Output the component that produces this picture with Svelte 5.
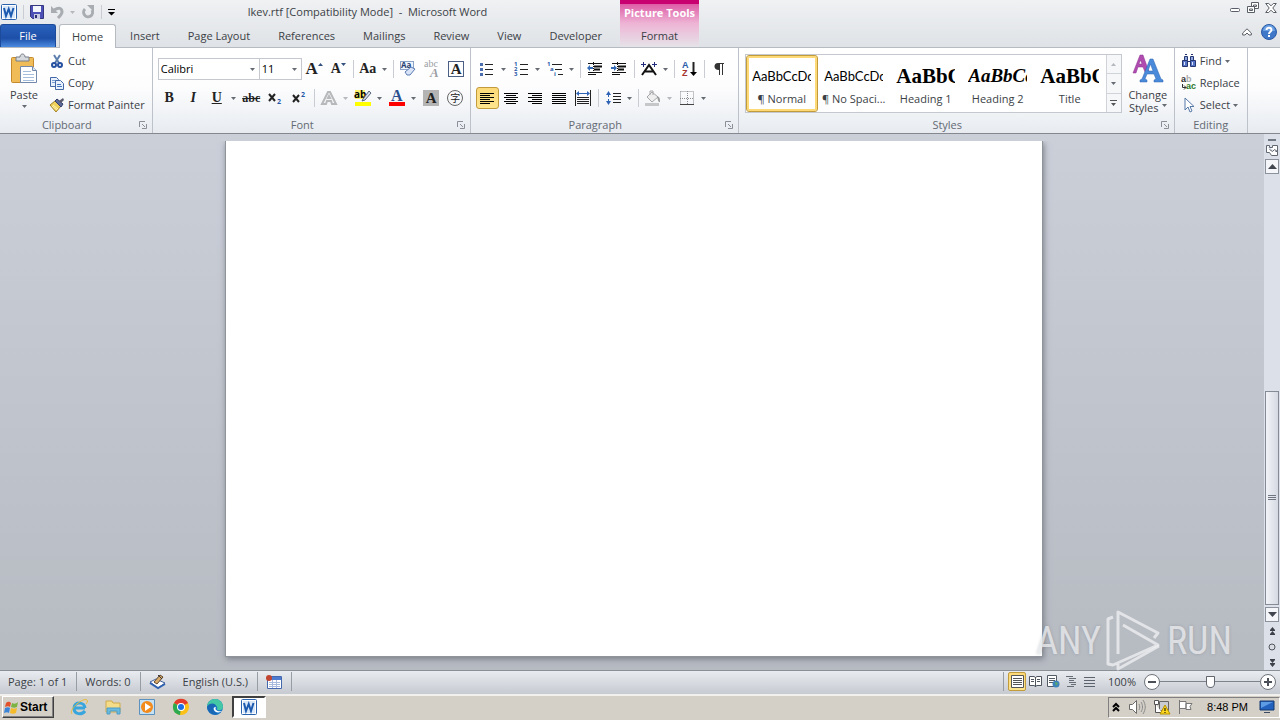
<script lang="ts">
  const tabs = ['Home', 'Insert', 'Page Layout', 'References', 'Mailings', 'Review', 'View', 'Developer'];
  let activeTab = $state('Home');

  const styles = [
    { name: '¶ Normal', sample: 'AaBbCcDc', kind: 'plain' },
    { name: '¶ No Spaci...', sample: 'AaBbCcDc', kind: 'plain' },
    { name: 'Heading 1', sample: 'AaBbC', kind: 'heading' },
    { name: 'Heading 2', sample: 'AaBbCc', kind: 'heading slanted' },
    { name: 'Title', sample: 'AaBbC', kind: 'heading' },
  ];
  let activeStyle = $state('¶ Normal');

  // [x, width] of every text line in the alignment glyphs, top to bottom
  const alignments: Record<string, number[][]> = {
    'Align Left': [[1, 14], [1, 10], [1, 14], [1, 10], [1, 14], [1, 10]],
    Center: [[1, 14], [3, 10], [1, 14], [3, 10], [1, 14], [3, 10]],
    'Align Right': [[1, 14], [5, 10], [1, 14], [5, 10], [1, 14], [5, 10]],
    Justify: [[1, 14], [1, 14], [1, 14], [1, 14], [1, 14], [1, 14]],
  };
  let alignment = $state('Align Left');
  let zoom = $state(50);
</script>

{#snippet arrow(cls = '')}
  <svg class="arrow {cls}" width="5" height="3" viewBox="0 0 5 3" aria-hidden="true"><path d="M0 0h5L2.500 3z" /></svg>
{/snippet}

{#snippet launcher(label: string)}
  <button class="launcher" aria-label={label}>
    <svg width="8" height="8" viewBox="0 0 8 8" fill="none" stroke="#8a8f98"><path d="M.5 6V.5H6M3 3l3 3M7.500 3v4.500H3" /></svg>
  </button>
{/snippet}

{#snippet wordLogo()}
  <svg width="16" height="16" viewBox="0 0 16 16">
    <rect x=".5" y=".5" width="15" height="15" rx="1" fill="#fff" stroke="#2a62ad" />
    <path d="M2 2h12v12H2z" fill="#d8e7f8" />
    <path d="M3 4l2 8 2.700-7L10 12l2.500-8" fill="none" stroke="#1c5ab0" stroke-width="2" />
  </svg>
{/snippet}

<div class="window">
  <header>
    <div class="header-main">
      <div class="titlebar">
        <div class="quick">
          {@render wordLogo()}
          <i class="sep"></i>
          <button aria-label="Save">
            <svg width="14" height="14" viewBox="0 0 14 14">
              <path d="M.5.5h13v13h-11l-2-2z" fill="#4c4fb5" stroke="#34367f" />
              <path d="M3 1h8v6H3z" fill="#f3f5fc" /><path d="M4 9h6v5H4z" fill="#c9cbe4" /><path d="M5 10h2v3H5z" fill="#2c2e70" />
            </svg>
          </button>
          <button aria-label="Undo">
            <svg width="14" height="14" viewBox="0 0 14 14" fill="none" stroke="#a9acb1" stroke-width="2">
              <path d="M4 5c5-3 8-2 8 2 0 2-2 4-4 6" stroke-width="3" /><path d="M1 1v7h7z" fill="#a9acb1" stroke="none" />
            </svg>
            {@render arrow('pale')}
          </button>
          <button aria-label="Redo">
            <svg width="14" height="14" viewBox="0 0 14 14" fill="none" stroke="#a9acb1">
              <path d="M4 4a4.500 4.500 0 1 0 7 1" stroke-width="3" /><path d="M6 0h7v7z" fill="#a9acb1" stroke="none" />
            </svg>
          </button>
          <i class="sep"></i>
          <button aria-label="Customize Quick Access Toolbar">
            <svg width="7" height="7" viewBox="0 0 7 7"><path d="M0 0h7v1H0zM0 3h7L3.500 6.500z" /></svg>
          </button>
        </div>
        <h1>lkev.rtf [Compatibility Mode] &nbsp;- &nbsp;Microsoft Word</h1>
      </div>
      <nav class="tabs">
        <button class="file">File</button>
        {#each tabs as tab}
          <button class="tab" class:active={tab === activeTab} onclick={() => (activeTab = tab)}>{tab}</button>
        {/each}
      </nav>
    </div>
    <div class="contextual">
      <strong>Picture Tools</strong>
      <button>Format</button>
    </div>
    <div class="header-end">
      <div class="controls">
        <button aria-label="Minimize">
          <svg width="12" height="12" viewBox="0 0 12 12" fill="#fff" stroke="#5a5f67"><rect x="1.500" y="6.500" width="9" height="3" rx="1" /></svg>
        </button>
        <button aria-label="Restore">
          <svg width="12" height="12" viewBox="0 0 12 12" fill="#fff" stroke="#5a5f67">
            <path d="M4.500.5h7v6h-7zM6.500 3h3v1.500h-3z" /><path d="M.5 4.500h7v6h-7zM2.500 7h3v1.500h-3z" />
          </svg>
        </button>
        <button aria-label="Close">
          <svg width="12" height="12" viewBox="0 0 12 12" fill="#fff" stroke="#5a5f67">
            <path d="M.7 1.500h3L6 3.800l2.300-2.300h3L7.800 6l3.500 4.500h-3L6 8.200l-2.300 2.300h-3L4.200 6z" />
          </svg>
        </button>
      </div>
      <div class="controls help">
        <button aria-label="Minimize the Ribbon">
          <svg width="10" height="8" viewBox="0 0 10 8" fill="#fff" stroke="#5a5f67"><path d="M5 .8L9.300 5v2H7L5 5 3 7H.7V5z" /></svg>
        </button>
        <button aria-label="Help">
          <svg width="16" height="16" viewBox="0 0 16 16">
            <circle cx="8" cy="8" r="7.500" fill="#3f78c9" stroke="#2a5ba5" /><path d="M2 7a6 6 0 0 1 12 0z" fill="#6ba0e3" />
            <path d="M5.500 6C5.500 2.800 10.500 3 10.500 6 10.500 7.800 8 7.800 8 10" fill="none" stroke="#fff" stroke-width="2" /><path d="M7 11h2v2H7z" fill="#fff" />
          </svg>
        </button>
      </div>
    </div>
  </header>

  <div class="ribbon">
    <section class="group">
      <div class="body clipboard">
        <button class="big">
          <svg width="28" height="30" viewBox="0 0 28 30">
            <rect x="1.500" y="3.500" width="22" height="25" rx="1" fill="#f0bc57" stroke="#c48a2d" />
            <path d="M6 3h4c0-4 5-4 5 0h4v4H6z" fill="#d5d9de" stroke="#777d86" />
            <path d="M10.500 12.500h12l4 4v12h-16z" fill="#fff" stroke="#7289ab" /><path d="M22.500 12.500v4h4" fill="#dbe6f4" stroke="#7289ab" />
            <path d="M13 17.500h8M13 20.500h11M13 23.500h11M13 26.500h11" stroke="#a6bddc" />
          </svg>
          <span>Paste</span>
          {@render arrow()}
        </button>
        <div class="stack">
          <button>
            <svg width="16" height="16" viewBox="0 0 16 16" fill="none">
              <path d="M5 2l5 8M11 2L6 10" stroke="#5c7fae" stroke-width="2" /><circle cx="5" cy="12" r="2" stroke="#2650a0" stroke-width="2" /><circle cx="11" cy="12" r="2" stroke="#2650a0" stroke-width="2" />
            </svg>Cut
          </button>
          <button>
            <svg width="16" height="16" viewBox="0 0 16 16" stroke="#4468a6">
              <path d="M1.500 2.500h6l2 2v7h-8z" fill="#e8f1fc" /><path d="M3 5.500h4M3 7.500h4" stroke="#7c9fd3" />
              <path d="M6.500 5.500h5l3 3v6h-8z" fill="#e8f1fc" /><path d="M8 9.500h4M8 11.500h5" stroke="#4776c0" />
            </svg>Copy
          </button>
          <button>
            <svg width="16" height="16" viewBox="0 0 16 16">
              <path d="M1 8l5-4 6 5-5 6z" fill="#eed05a" stroke="#a3822b" /><path d="M4 8l5 4M3 9l5 4" stroke="#fff4b0" />
              <path d="M6 4l2-2 6 5-2 3z" fill="#5d6a99" stroke="#333d68" /><path d="M10 4l4-3 1 2-3 3z" fill="#5a5a6b" />
            </svg>Format Painter
          </button>
        </div>
      </div>
      <div class="caption"><span>Clipboard</span>{@render launcher('Clipboard options')}</div>
    </section>

    <section class="group">
      <div class="body">
        <div class="row">
          <div class="pickers">
            <label class="picker family"><select aria-label="Font"><option>Calibri</option></select>{@render arrow()}</label>
            <label class="picker size"><select aria-label="Font Size"><option>11</option></select>{@render arrow()}</label>
          </div>
          <button class="tool serif grow" aria-label="Grow Font">A<svg width="5" height="12" viewBox="0 0 5 12"><path d="M0 3h5L2.500 0z" fill="#33517f" /></svg></button>
          <button class="tool serif" aria-label="Shrink Font">A<svg width="5" height="12" viewBox="0 0 5 12"><path d="M0 0h5L2.500 3z" fill="#33517f" /></svg></button>
          <i class="sep"></i>
          <button class="tool split serif" aria-label="Change Case"><span>Aa</span>{@render arrow()}</button>
          <i class="sep"></i>
          <button class="tool" aria-label="Clear Formatting">
            <svg width="18" height="18" viewBox="0 0 18 18">
              <rect x="1.500" y="1.500" width="13" height="8" fill="#eef4fc" stroke="#8ba1c6" />
              <text x="2" y="8" font-size="8" font-weight="700" fill="#28406f">Aa</text>
              <path d="M6 12l6-5 4 2-5 6H8z" fill="#d9e4f6" stroke="#5b7bb3" />
            </svg>
          </button>
          <button class="tool" aria-label="Phonetic Guide">
            <svg class="serif" width="18" height="18" viewBox="0 0 18 18" fill="#9c9fa4"><text x="1" y="7" font-size="10">abc</text><text x="7" y="17" font-size="13" font-style="italic" font-weight="700">A</text></svg>
          </button>
          <button class="tool serif" aria-label="Character Border"><span class="boxed">A</span></button>
        </div>
        <div class="row">
          <button class="tool serif" aria-label="Bold">B</button>
          <button class="tool serif" aria-label="Italic"><em>I</em></button>
          <button class="tool split serif" aria-label="Underline"><span><u>U</u></span>{@render arrow()}</button>
          <button class="tool serif small" aria-label="Strikethrough"><s>abc</s></button>
          <button class="tool" aria-label="Subscript"><svg width="16" height="14" viewBox="0 0 16 14"><path d="M2 3l6 7M8 3l-6 7" stroke="#222" stroke-width="2" /><text x="10" y="13" font-size="7" font-weight="700" fill="#2859a8">2</text></svg></button>
          <button class="tool" aria-label="Superscript"><svg width="16" height="14" viewBox="0 0 16 14"><path d="M2 4l6 7M8 4l-6 7" stroke="#222" stroke-width="2" /><text x="10" y="6" font-size="7" font-weight="700" fill="#2859a8">2</text></svg></button>
          <i class="sep"></i>
          <button class="tool split serif" aria-label="Text Effects"><span><svg width="18" height="18" viewBox="0 0 18 18"><path d="M2 15L8 3h2l6 12h-4l-1-3H7l-1 3zM8 9h2L9 7z" fill="#f4f4f4" stroke="#b6b8bb" stroke-width="2" /></svg></span>{@render arrow('pale')}</button>
          <button class="tool split" aria-label="Text Highlight Color">
            <span><svg width="18" height="18" viewBox="0 0 18 18"><path d="M1 1h10v9H1z" fill="#fff36b" /><text x="0" y="9" font-size="10" font-weight="700">ab</text><path d="M9 10l6-8 2 2-6 7-3 1z" fill="#d4dde9" stroke="#58687f" /><path d="M1 13h16v4H1z" fill="#ff0" /></svg></span>{@render arrow()}
          </button>
          <button class="tool split" aria-label="Font Color">
            <span><svg class="serif" width="18" height="18" viewBox="0 0 18 18"><text x="3" y="12" font-size="16" font-weight="700" fill="#2c4f8e">A</text><path d="M1 13h16v4H1z" fill="#f00" /></svg></span>{@render arrow()}
          </button>
          <button class="tool serif" aria-label="Character Shading"><span class="shaded">A</span></button>
          <button class="tool" aria-label="Enclose Characters"><span class="enclosed">字</span></button>
        </div>
      </div>
      <div class="caption"><span>Font</span>{@render launcher('Font options')}</div>
    </section>

    <section class="group">
      <div class="body paragraph">
        <div class="row">
          <button class="tool split" aria-label="Bullets"><span>
            <svg width="16" height="14" viewBox="0 0 16 14"><path d="M1 1h3v3H1zM1 6h3v3H1zM1 11h3v3H1z" fill="#4b6fae" /><path d="M6 2.500h8M6 7.500h8M6 12.500h8" stroke="#222" /></svg></span>{@render arrow()}
          </button>
          <button class="tool split" aria-label="Numbering"><span>
            <svg width="16" height="16" viewBox="0 0 16 16"><g font-size="6" font-weight="700" fill="#2859a8"><text x="1" y="5">1</text><text x="1" y="10">2</text><text x="1" y="15">3</text></g><path d="M7 3.500h8M7 8.500h8M7 13.500h8" stroke="#222" /></svg></span>{@render arrow()}
          </button>
          <button class="tool split" aria-label="Multilevel List"><span>
            <svg width="18" height="16" viewBox="0 0 18 16"><g font-size="6" font-weight="700" fill="#2859a8"><text x="1" y="5">1</text><text x="4" y="10">a</text><text x="8" y="15">i</text></g><path d="M6 3.500h10M9 8.500h7M12 13.500h5" stroke="#222" /></svg></span>{@render arrow()}
          </button>
          <i class="sep"></i>
          {#each ['Decrease Indent', 'Increase Indent'] as label, i}
            <button class="tool" aria-label={label}>
              <svg width="16" height="14" viewBox="0 0 16 14">
                <path d="M1 1.500h14M1 10.500h14M1 12.500h8" stroke="#111" /><path d="M7 4.500h8M7 7.500h6" stroke="#111" stroke-width="2" />
                <path d="M6.500 0v14" stroke="#111" stroke-dasharray="1 1" />
                <path d={i ? 'M0 5h3V3l3 3-3 3V7H0z' : 'M6 5H3V3L0 6l3 3V7h3z'} fill="#356bb5" />
              </svg>
            </button>
          {/each}
          <i class="sep"></i>
          <button class="tool split" aria-label="Asian Layout"><span>
            <svg width="18" height="16" viewBox="0 0 18 16" fill="none"><path d="M2 14L9 4l7 10M5 10.500h8" stroke="#111" stroke-width="2" /><path d="M1 3.500h5M12 3.500h5M3.500 1v5M14.500 1v5" stroke="#212d7c" /></svg></span>{@render arrow()}
          </button>
          <i class="sep"></i>
          <button class="tool" aria-label="Sort">
            <svg class="sans" width="16" height="16" viewBox="0 0 16 16"><g font-size="9" font-weight="700"><text x="1" y="7" fill="#2859a8">A</text><text x="1" y="15" fill="#a5342e">Z</text></g><path d="M12.500 1v12" stroke="#222" stroke-width="2" /><path d="M9 11h7l-3.500 4z" /></svg>
          </button>
          <i class="sep"></i>
          <button class="tool" aria-label="Show/Hide ¶">
            <svg width="12" height="14" viewBox="0 0 12 14"><path d="M11 1.500H6M6.500 1v12M9.500 1v12" stroke="#333" /><path d="M7 1v7C0 9 0 1 5 1z" fill="#333" /></svg>
          </button>
        </div>
        <div class="row">
          {#each Object.entries(alignments) as [label, lines]}
            <button class="tool" class:on={label === alignment} aria-label={label} onclick={() => (alignment = label)}>
              <svg width="16" height="13" viewBox="0 0 16 13">
                {#each lines as [x, w], i}<rect {x} y={1 + i * 2} width={w} height="1" />{/each}
              </svg>
            </button>
          {/each}
          <button class="tool" aria-label="Distributed">
            <svg width="16" height="16" viewBox="0 0 16 16"><path d="M.5 0v16M15.500 0v16M2 7.500h12M2 9.500h12M2 11.500h12M2 13.500h12" stroke="#222" /><path d="M2 3.500h12" stroke="#2e62b5" /><path d="M1 3.500L4 1v5zM15 3.500L12 1v5z" fill="#2e62b5" /></svg>
          </button>
          <i class="sep"></i>
          <button class="tool split" aria-label="Line Spacing"><span>
            <svg width="16" height="16" viewBox="0 0 16 16"><path d="M3.500 2v12" stroke="#2e62b5" stroke-dasharray="5 2" /><path d="M1 5l2.500-4L6 5zM1 11l2.500 4L6 11z" fill="#2e62b5" /><path d="M8 3.500h8M8 6.500h8M8 9.500h8M8 12.500h8" stroke="#222" /></svg></span>{@render arrow()}
          </button>
          <i class="sep"></i>
          <button class="tool split" aria-label="Shading"><span>
            <svg width="18" height="16" viewBox="0 0 18 16"><path d="M3 7l5-5 6 5-6 5z" fill="#eee" stroke="#a5a7aa" /><path d="M6 5V1h3v4" fill="none" stroke="#a5a7aa" /><path d="M13 6c3 1 3 3 3 6-2 0-2-2-3-6z" fill="#999" /><path d="M1 13h14v3H1z" fill="#c6c7c9" /></svg></span>{@render arrow('pale')}
          </button>
          <button class="tool split" aria-label="Borders"><span>
            <svg width="14" height="14" viewBox="0 0 14 14" fill="none" stroke="#8a8d92"><path d="M.5.5h13v13M.5.5v13M7.500 0v13M0 7.500h13" stroke-dasharray="1 1" /><path d="M0 13.500h14" stroke="#444" /></svg></span>{@render arrow()}
          </button>
        </div>
      </div>
      <div class="caption"><span>Paragraph</span>{@render launcher('Paragraph options')}</div>
    </section>

    <section class="group">
      <div class="body styles">
        <div class="gallery">
          {#each styles as style}
            <button class="style" class:chosen={style.name === activeStyle} onclick={() => (activeStyle = style.name)}>
              <span class="sample {style.kind}">{style.sample}</span>
              <span>{style.name}</span>
            </button>
          {/each}
          <div class="gallery-nav">
            <button aria-label="Previous styles">{@render arrow('pale up')}</button>
            <button aria-label="Next styles">{@render arrow()}</button>
            <button aria-label="More styles"><svg width="7" height="6" viewBox="0 0 7 6" fill="#555"><path d="M0 0h7v1H0zM1 3h5L3.500 6z" /></svg></button>
          </div>
        </div>
        <button class="big">
          <svg width="32" height="30" viewBox="0 0 32 30">
            <path d="M1 19L8 1h3l6 17h-4l-2-5H6l-2 6zM7 10h3L8.500 6z" fill="#b04bb0" stroke="#8a3590" stroke-width=".5" />
            <path d="M8 28v-2l2-1L18 5h3l8 20 2 1v2h-9v-2l2-1-2-5h-7l-2 5 2 1v2zM16 17h5l-2.500-7z" fill="#4a8adb" stroke="#2d62ae" stroke-width=".5" />
          </svg>
          <span>Change</span>
          <span>Styles {@render arrow()}</span>
        </button>
      </div>
      <div class="caption"><span>Styles</span>{@render launcher('Styles options')}</div>
    </section>

    <section class="group">
      <div class="body clipboard">
        <div class="stack">
          <button>
            <svg width="16" height="16" viewBox="0 0 16 16" stroke="#26366f"><path d="M3.500 3.500h3v4h-3zM9.500 3.500h3v4h-3z" fill="#8fa7e0" /><path d="M1.500 7.500h5v6h-5zM9.500 7.500h5v6h-5z" fill="#5573c4" /><path d="M4 1.500h2M10 1.500h2M7 8.500h2" /><path d="M3.500 9v3M11.500 9v3" stroke="#dbe4fa" /></svg>
            Find {@render arrow()}
          </button>
          <button>
            <svg class="sans" width="16" height="16" viewBox="0 0 16 16" font-size="9" font-weight="700"><text x="0" y="7" fill="#333">a</text><text x="5" y="7" fill="#aaa">b</text><text x="5" y="14" fill="#2c7a2c">ac</text><path d="M1.500 9v3.500H5M3 10.500l2 2-2 2" fill="none" stroke="#333" /></svg>
            Replace
          </button>
          <button>
            <svg width="16" height="16" viewBox="0 0 16 16"><path d="M4 1v12l3-3 2 5 2-1-2-4.500h4z" fill="#fff" stroke="#5779a8" /></svg>
            Select {@render arrow()}
          </button>
        </div>
      </div>
      <div class="caption"><span>Editing</span></div>
    </section>
  </div>

  <main>
    <div class="canvas">
      <article class="sheet"></article>
    </div>
    <div class="scrollbar">
      <i class="splitter"></i>
      <button aria-label="View Ruler"><svg width="12" height="13" viewBox="0 0 12 13" fill="#fff" stroke="#636973"><path d="M.5 1.500h3v2h3v-2h5v6h-2M.5 1.500v7h3l2 3h6v-4l-3-2-2 2-3-2" /></svg></button>
      <button class="cap" aria-label="Scroll up"><svg width="9" height="5" viewBox="0 0 9 5"><path d="M0 5h9L4.500 0z" /></svg></button>
      <div class="track"><div class="thumb"><i></i><i></i><i></i></div></div>
      <button class="cap" aria-label="Scroll down"><svg width="9" height="5" viewBox="0 0 9 5"><path d="M0 0h9L4.500 5z" /></svg></button>
      <button class="browse" aria-label="Previous page"><svg width="7" height="8" viewBox="0 0 7 8"><path d="M1 3h5L3.500 0zM1 7h5L3.500 4zM1 3h5v1H1zM1 7h5v1H1z" /></svg></button>
      <button class="browse" aria-label="Select browse object"><svg width="8" height="8" viewBox="0 0 8 8"><circle cx="4" cy="4" r="3" fill="#d9dce2" stroke="#50555e" /></svg></button>
      <button class="browse" aria-label="Next page"><svg width="7" height="8" viewBox="0 0 7 8"><path d="M1 1h5L3.500 4zM1 5h5L3.500 8zM1 0h5v1H1zM1 4h5v1H1z" /></svg></button>
    </div>
    <div class="watermark">
      <span>ANY</span>
      <svg width="56" height="62" viewBox="0 0 56 62" fill="none" stroke="currentColor" stroke-width="3" stroke-linejoin="round">
        <path d="M7 7L2 9v45l5 1 45-20-35-20" /><path d="M48 28l4-5L12 2v42" /><path d="M12 54v5l41-23" />
      </svg>
      <span>RUN</span>
    </div>
  </main>

  <footer class="status">
    <button>Page: 1 of 1</button>
    <button>Words: 0</button>
    <button class="proofing" aria-label="Proofing">
      <svg width="17" height="15" viewBox="0 0 17 15"><path d="M1 8l6-3 9 4-7 5z" fill="#fff" stroke="#3e5f9e" /><path d="M1 9l8 5 7-4" fill="none" stroke="#3162b0" stroke-width="2" /><path d="M5 8l6-7 3 2-6 7z" fill="#d9aa68" stroke="#5b4530" /><path d="M9 1l4 4" stroke="#333" /></svg>
    </button>
    <button>English (U.S.)</button>
    <button aria-label="Macro recording">
      <svg width="16" height="14" viewBox="0 0 16 14"><path d="M1.500 1.500h14v12h-14z" fill="#fff" stroke="#4468ae" /><path d="M2 2h13v3H2z" fill="#4e7bd0" /><path d="M3 7.500h11M3 9.500h11M3 11.500h11M6.500 5v8M10.500 5v8" stroke="#a8bbdd" /><circle cx="3" cy="3" r="3" fill="#c0442f" /></svg>
    </button>
    <div class="views">
      <button class="on" aria-label="Print Layout"><svg width="13" height="13" viewBox="0 0 13 13" fill="#fff" stroke="#555"><path d="M.5.5h12v12H.5zM2 3.500h9M2 5.500h9M2 7.500h9M2 9.500h9" /></svg></button>
      <button aria-label="Full Screen Reading"><svg width="13" height="13" viewBox="0 0 13 13" fill="#fff" stroke="#4f555e"><path d="M.5 1.500H5l1.500 1L8 1.500h4.500v9H8l-1.500 1-1.500-1H.5zM6.500 2v10M2 4.500h3M2 6.500h3M8 4.500h3M8 6.500h3" /></svg></button>
      <button aria-label="Web Layout"><svg width="13" height="13" viewBox="0 0 13 13"><path d="M.5.5h9v11h-9zM2 3.500h6M2 5.500h6M2 7.500h4" fill="#fff" stroke="#555b64" /><circle cx="9" cy="9" r="3.500" fill="#3f83ba" /><path d="M8 7l3 1-2 3z" fill="#5dad66" /></svg></button>
      <button aria-label="Outline"><svg width="13" height="13" viewBox="0 0 13 13"><path d="M1 1.500h7M4 3.500h7M4 5.500h5M4 7.500h7M6 9.500h5M2 11.500h7" stroke="#666c76" /></svg></button>
      <button aria-label="Draft"><svg width="13" height="13" viewBox="0 0 13 13"><path d="M1 2.500h11M1 5.500h11M1 8.500h11M1 11.500h11" stroke="#5d636d" /></svg></button>
    </div>
    <button class="percent">100%</button>
    <div class="zoom">
      <button class="round" aria-label="Zoom Out"><svg width="8" height="8" viewBox="0 0 8 8"><path d="M0 3h8v2H0z" /></svg></button>
      <input type="range" min="0" max="100" bind:value={zoom} aria-label="Zoom" />
      <button class="round" aria-label="Zoom In"><svg width="8" height="8" viewBox="0 0 8 8"><path d="M0 3h8v2H0zM3 0h2v8H3z" /></svg></button>
    </div>
  </footer>

  <footer class="taskbar">
    <button class="start">
      <svg width="15" height="15" viewBox="0 0 15 15"><path d="M2 3c2-2 4-1 5 0L6 7C5 6 3 6 1 7z" fill="#e2532b" /><path d="M8 3c2 1 4 1 6-1l-1 5c-2 1-4 1-6 0z" fill="#7cb342" /><path d="M1 8c2-1 4-1 5 0l-1 5c-1-1-3-1-5 0z" fill="#3c84d8" /><path d="M7 8c2 1 4 1 6 0l-1 5c-2 1-4 1-6 0z" fill="#f5bb2a" /></svg>
      Start
    </button>
    <div class="pinned">
      <button aria-label="Internet Explorer"><svg width="18" height="18" viewBox="0 0 18 18" fill="none"><path d="M15 10H5M15 10C15 4 4 3 4 10s8 7 11 3" stroke="#39a5dd" stroke-width="3" /><path d="M2 16C-2 12 13-1 17 2c1 1 0 3-1 4" stroke="#e6b938" stroke-width="1" /></svg></button>
      <button aria-label="Explorer"><svg width="18" height="18" viewBox="0 0 18 18"><path d="M2 3h6l1 2h7v9H2z" fill="#f4dc88" stroke="#cfaa4a" /><path d="M3 10h13v6h-3v-3H6v3H3z" fill="#6bbbe0" stroke="#4a9cc7" /></svg></button>
      <button aria-label="Media Player"><svg width="18" height="18" viewBox="0 0 18 18"><path d="M1.500 1.500h15v15h-15z" fill="#c6e1f3" stroke="#5b91bf" /><circle cx="9" cy="9" r="6" fill="#f28a1c" /><path d="M7 5l6 4-6 4z" fill="#fff" /></svg></button>
      <button aria-label="Chrome"><svg width="18" height="18" viewBox="0 0 18 18"><circle cx="9" cy="9" r="8" fill="#fbc116" /><path d="M9 9L2 5a8 8 0 0 1 14 0z" fill="#e33b2e" /><path d="M9 9l-1 8A8 8 0 0 1 2 5z" fill="#2da94f" /><circle cx="9" cy="9" r="4" fill="#fff" /><circle cx="9" cy="9" r="3" fill="#1b6fe4" /></svg></button>
      <button aria-label="Edge"><svg width="18" height="18" viewBox="0 0 18 18"><circle cx="9" cy="9" r="8" fill="#1976c8" /><path d="M1 9a8 8 0 0 1 16 0c0 4-6 4-6 2 2-4-6-6-10-2z" fill="#43c7a5" /><path d="M1 9c2-5 9-4 9-1-4 0-4 6 2 8A8 8 0 0 1 1 9z" fill="#1a67b5" /><path d="M10 9c-2 3 2 5 6 4-2 2-7 2-8-1-1-2 0-3 2-3z" fill="#fff" /></svg></button>
      <button class="running" aria-label="Word">{@render wordLogo()}</button>
    </div>
    <div class="tray">
      <svg width="9" height="9" viewBox="0 0 9 9" fill="none" stroke="#000" stroke-width="2"><path d="M1 4l3-3 3 3M1 8l3-3 3 3" /></svg>
      <svg width="18" height="16" viewBox="0 0 18 16" fill="#fff" stroke="#6b6b6b"><path d="M1.500 5.500h3l4-4v13l-4-4h-3z" /><path d="M11 5c1 2 1 4 0 6M13 3c2 3 2 7 0 10M15 1c3 5 3 9 0 14" fill="none" stroke="#8b8b8b" /></svg>
      <svg width="18" height="16" viewBox="0 0 18 16"><path d="M6.500 2.500h9v9h-9z" fill="#c9ccd0" stroke="#666" /><path d="M1.500 1.500h4v4h-4zM2.500 5v8.500H9" fill="#fff" stroke="#555" /><path d="M12 6l5 9H7z" fill="#ffd71f" stroke="#b59300" /><path d="M11.500 9h1v3h-1zM11.500 13h1v1h-1z" /></svg>
      <svg width="16" height="16" viewBox="0 0 16 16" fill="#fff" stroke="#777"><path d="M1.500 1v14M2 2.500h6v7H2M8 4.500h6l-2 3 1 3H8z" /></svg>
      <time>8:48 PM</time>
      <svg width="16" height="16" viewBox="0 0 16 16"><path d="M1 2h14v9H1z" fill="#2261bd" stroke="#15386f" /><path d="M2 3h12L2 9z" fill="#5e9be5" /><path d="M5 13h6v1H5z" fill="#3b4a60" /></svg>
    </div>
  </footer>
</div>

<style>
  :global(body) {
    margin: 0;
    overflow: hidden;
  }

  .window {
    display: flex;
    flex-direction: column;
    height: 100vh;
    font-family: 'Open Sans', 'Noto Sans', sans-serif;
    font-size: 11px;
    line-height: 14px;
    color: #3b3f46;
    cursor: default;
  }

  button, select {
    margin: 0;
    padding: 0;
    border: 0;
    background: none;
    font: inherit;
    color: inherit;
    white-space: nowrap;
  }

  svg {
    display: block;
    flex: none;
    overflow: visible;
  }

  .serif { font-family: 'Liberation Serif', serif; }
  .sans { font-family: 'Liberation Sans', sans-serif; }

  .arrow { fill: #666b73; }
  .arrow.pale { fill: #b5b8bd; }
  .arrow.up { transform: rotate(180deg); }

  /* title bar and tabs */
  header {
    display: flex;
    height: 47px;
    background: linear-gradient(#eff1f3, #dfe2e6);
    border-bottom: 1px solid #b6bac1;
  }

  .header-main {
    display: flex;
    flex-direction: column;
    width: 620px;
  }

  .titlebar {
    display: flex;
    align-items: center;
    height: 24px;
  }

  .quick {
    display: flex;
    align-items: center;
    gap: 6px;
    padding-left: 1px;
  }

  .quick button {
    display: flex;
    align-items: center;
    gap: 6px;
  }

  .quick .sep {
    height: 14px;
    margin: 0;
  }

  h1 {
    flex: 1;
    margin: 0;
    font-size: 11px;
    font-weight: 400;
    text-align: center;
  }

  .tabs {
    display: flex;
    flex: 1;
    align-items: stretch;
  }

  .file {
    width: 56px;
    margin-right: 3px;
    border: 1px solid #1c4b9c;
    border-bottom: 0;
    border-radius: 3px 3px 0 0;
    background: linear-gradient(#2a62bd, #1d4fa8 60%, #4b8be0);
    color: #fff;
  }

  .tab {
    padding: 0 14px;
    border-radius: 3px 3px 0 0;
  }

  .tab.active {
    margin-bottom: -1px;
    padding: 0 12px;
    border: 1px solid #b6bac1;
    border-bottom: 0;
    background: #fff;
  }

  .contextual {
    display: flex;
    flex-direction: column;
    justify-content: space-between;
    box-sizing: border-box;
    width: 79px;
    padding-top: 2px;
    border-top: 4px solid #c9006f;
    background: linear-gradient(#dd5ca5, #eeb4d5 45%, #e5e3e8);
    text-align: center;
  }

  .contextual strong {
    color: #fff;
    font-size: 11px;
    white-space: nowrap;
  }

  .contextual button { height: 23px; }

  .header-end {
    display: flex;
    flex: 1;
    flex-direction: column;
    align-items: flex-end;
  }

  .controls {
    display: flex;
    align-items: center;
    gap: 6px;
    height: 18px;
    padding-right: 3px;
  }

  .help {
    gap: 9px;
    height: 34px;
  }

  /* ribbon */
  .ribbon {
    display: flex;
    height: 85px;
    border-bottom: 1px solid #85898f;
    background: linear-gradient(#fff, #fdfdfe 45%, #e7ebf0);
  }

  .group {
    display: flex;
    flex-direction: column;
    justify-content: space-between;
    border-right: 1px solid #bdc2ca;
  }

  .body {
    display: flex;
    flex-direction: column;
    gap: 7px;
    padding: 10px 2px 0 5px;
  }

  .paragraph { padding-right: 7px; }

  .caption {
    display: flex;
    align-items: center;
    height: 16px;
    color: #646a74;
  }

  .caption span {
    flex: 1;
    text-align: center;
  }

  .launcher {
    display: flex;
    justify-content: center;
    width: 18px;
  }

  .clipboard {
    flex-direction: row;
    gap: 5px;
    padding: 2px 7px 0 5px;
  }

  .big {
    display: flex;
    flex-direction: column;
    align-items: center;
    padding-top: 4px;
  }

  .clipboard .big {
    width: 38px;
    gap: 4px;
    line-height: 13px;
  }

  .big span {
    display: flex;
    align-items: center;
    gap: 3px;
  }

  .stack {
    display: flex;
    flex-direction: column;
    padding-left: 1px;
  }

  .stack button {
    display: flex;
    align-items: center;
    gap: 3px;
    height: 22px;
  }

  .row {
    display: flex;
    align-items: center;
    gap: 1px;
    height: 22px;
  }

  .sep {
    width: 1px;
    height: 18px;
    margin: 0 2px;
    background: #c9cdd3;
  }

  .pickers { display: flex; }

  .picker {
    display: flex;
    align-items: center;
    box-sizing: border-box;
    height: 22px;
    padding: 0 4px 0 2px;
    border: 1px solid #c5c9cf;
    background: #fff;
    color: #000;
  }

  .picker select {
    flex: 1;
    min-width: 0;
    appearance: none;
  }

  .family { width: 102px; }

  .size {
    width: 43px;
    margin-left: -1px;
  }

  .tool {
    display: flex;
    align-items: center;
    justify-content: center;
    box-sizing: border-box;
    width: 23px;
    height: 22px;
    border-radius: 3px;
    color: #222;
  }

  .tool.serif {
    font-size: 14px;
    font-weight: 700;
  }

  .tool.grow { font-size: 17px; }
  .tool.small { font-size: 12px; }
  .tool.split { width: 33px; }

  .split span {
    display: flex;
    justify-content: center;
    width: 22px;
  }

  .split .arrow { margin: 0 3px; }

  .on {
    border: 1px solid #c29b3a;
    background: linear-gradient(#fdd978, #fde58f);
  }

  .boxed, .shaded {
    width: 14px;
    border: 1px solid #4b5f85;
    font-size: 15px;
    text-align: center;
  }

  .shaded {
    border-color: #b4b4b4;
    background: #b4b4b4;
  }

  .enclosed {
    width: 14px;
    border: 1px solid #666;
    border-radius: 8px;
    font-family: 'Noto Sans CJK SC', sans-serif;
    font-size: 10px;
    text-align: center;
  }

  .styles {
    flex-direction: row;
    gap: 3px;
    padding: 6px 3px 0 6px;
  }

  .gallery {
    display: flex;
    box-sizing: border-box;
    height: 59px;
    border: 1px solid #c5c9cf;
    background: #fff;
  }

  .style {
    display: flex;
    flex-direction: column;
    justify-content: space-between;
    align-items: center;
    box-sizing: border-box;
    width: 72px;
    padding: 8px 4px 5px;
    border: 1px solid transparent;
    border-radius: 3px;
  }

  .style.chosen {
    border-color: #c29b3a;
    box-shadow: inset 0 0 0 2px #fdd978;
  }

  .sample {
    width: 59px;
    overflow: hidden;
    color: #000;
    font-family: Lato, sans-serif;
    font-size: 13px;
    line-height: 24px;
    text-align: left;
  }

  .sample.heading {
    font-family: 'Liberation Serif', serif;
    font-size: 21px;
    font-weight: 700;
  }

  .sample.slanted {
    font-size: 19px;
    font-style: italic;
  }

  .gallery-nav {
    display: flex;
    flex-direction: column;
    width: 14px;
    border-left: 1px solid #d0d4d9;
  }

  .gallery-nav button {
    display: flex;
    flex: 1;
    align-items: center;
    justify-content: center;
    background: #f5f7f9;
  }

  .gallery-nav button + button { border-top: 1px solid #d0d4d9; }

  .styles .big {
    width: 46px;
    padding: 0;
    line-height: 13px;
  }

  .styles .big svg:first-child { margin-bottom: 4px; }

  /* document area */
  main {
    position: relative;
    display: flex;
    flex: 1;
    min-height: 0;
    background: linear-gradient(#cbcfd8, #b6bac1);
  }

  .canvas {
    display: flex;
    flex: 1;
    justify-content: center;
    padding: 7px 0 13px 4px;
  }

  .sheet {
    width: 816px;
    border: 1px solid #8f939a;
    border-top: 0;
    background: #fff;
    box-shadow: 1px 2px 6px #7b7f88;
    clip-path: inset(0 -10px -10px -10px);
  }

  .scrollbar {
    display: flex;
    flex-direction: column;
    align-items: center;
    gap: 2px;
    width: 16px;
    padding-top: 5px;
    background: #dce0e9;
  }

  .splitter {
    width: 8px;
    height: 2px;
    margin-bottom: 1px;
    background: #737983;
  }

  .cap {
    display: flex;
    align-items: center;
    justify-content: center;
    box-sizing: border-box;
    width: 14px;
    height: 15px;
    border: 1px solid #8c929c;
    background: #f4f6f9;
    fill: #42464e;
  }

  .track {
    display: flex;
    flex: 1;
    flex-direction: column;
    justify-content: flex-end;
  }

  .thumb {
    display: flex;
    flex-direction: column;
    align-items: center;
    justify-content: center;
    gap: 1px;
    box-sizing: border-box;
    width: 14px;
    height: 50%;
    border: 1px solid #858b95;
    background: linear-gradient(90deg, #f1f3f8, #d5d9e2);
  }

  .thumb i {
    width: 8px;
    height: 1px;
    background: #70767f;
  }

  .browse {
    display: flex;
    align-items: center;
    height: 14px;
    fill: #3d4149;
  }

  .watermark {
    position: absolute;
    right: 48px;
    bottom: -2px;
    display: flex;
    align-items: center;
    gap: 5px;
    color: rgba(240, 241, 243, 0.75);
    font-family: 'Roboto Condensed', 'Liberation Sans Narrow', sans-serif;
    font-size: 38px;
    line-height: 60px;
    text-shadow: 0 0 3px rgba(90, 95, 105, 0.3);
    pointer-events: none;
  }

  /* status bar */
  .status {
    display: flex;
    align-items: center;
    box-sizing: border-box;
    height: 24px;
    padding-bottom: 2px;
    border-top: 1px solid #8b8f96;
    background: linear-gradient(#e9ecf0, #c6cad1);
  }

  .status > button {
    height: 19px;
    padding: 0 9px 0 8px;
    border-right: 1px solid #979ca5;
  }

  .status > .proofing { border: 0; }

  .views {
    display: flex;
    margin-left: auto;
    padding: 0 2px 0 4px;
    border-left: 1px solid #979ca5;
  }

  .views button {
    display: flex;
    align-items: center;
    justify-content: center;
    box-sizing: border-box;
    width: 18px;
    height: 19px;
    border-radius: 2px;
  }

  .status > .percent {
    padding-right: 8px;
    border: 0;
  }

  .zoom {
    display: flex;
    align-items: center;
    padding-right: 4px;
  }

  .round {
    display: flex;
    align-items: center;
    justify-content: center;
    box-sizing: border-box;
    width: 16px;
    height: 16px;
    border: 1px solid #6d727a;
    border-radius: 8px;
    background: #fff;
    fill: #4b5058;
  }

  .zoom input {
    width: 100px;
    height: 16px;
    margin: 0;
    appearance: none;
    background: linear-gradient(#7e838b, #7e838b) center / 100% 1px no-repeat;
  }

  .zoom input::-webkit-slider-thumb {
    width: 9px;
    height: 12px;
    appearance: none;
    border: 1px solid #62676f;
    border-radius: 1px 1px 5px 5px;
    background: #fff;
  }

  /* taskbar */
  .taskbar {
    display: flex;
    align-items: center;
    box-sizing: border-box;
    height: 26px;
    padding-bottom: 2px;
    border-top: 2px solid #f2f0ec;
    background: #d4d0c8;
  }

  .start {
    display: flex;
    align-items: center;
    gap: 1px;
    box-sizing: border-box;
    width: 52px;
    height: 22px;
    margin-left: 2px;
    padding-left: 1px;
    border: 1px solid;
    border-color: #fff #404040 #404040 #fff;
    box-shadow: inset -1px -1px #808080;
    color: #000;
    font-family: 'Liberation Sans', sans-serif;
    font-size: 12px;
    font-weight: 700;
  }

  .pinned {
    display: flex;
    padding-left: 8px;
  }

  .pinned button {
    display: flex;
    align-items: center;
    justify-content: center;
    box-sizing: border-box;
    width: 34px;
    height: 22px;
  }

  .pinned .running {
    border: 2px solid;
    border-color: #404040 #fff #fff #404040;
    background: #fff;
  }

  .tray {
    display: flex;
    align-items: center;
    gap: 7px;
    box-sizing: border-box;
    height: 21px;
    margin-left: auto;
    padding: 0 4px 0 3px;
    border: 1px solid;
    border-color: #808080 #fff #fff #808080;
  }

  time {
    padding: 0 4px 0 6px;
    color: #000;
    font-family: 'Liberation Sans', sans-serif;
  }
</style>
